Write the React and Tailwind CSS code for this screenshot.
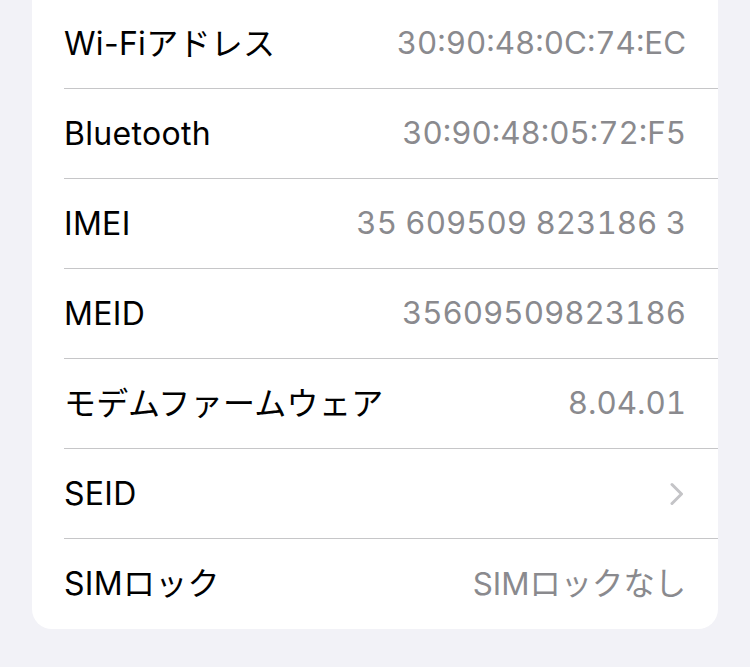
import React from 'react';

const rows = [
  { label: 'Wi-Fiアドレス', value: '30:90:48:0C:74:EC' },
  { label: 'Bluetooth', value: '30:90:48:05:72:F5' },
  { label: 'IMEI', value: '35 609509 823186 3' },
  { label: 'MEID', value: '35609509823186' },
  { label: 'モデムファームウェア', value: '8.04.01' },
  { label: 'SEID', chevron: true },
  { label: 'SIMロック', value: 'SIMロックなし' },
];

const Chevron = () => (
  <svg width="14" height="24" viewBox="0 0 14 24" fill="none" className="mr-[2px]">
    <path d="M2 2.5 L11.5 12 L2 21.5" stroke="#c4c4c7" strokeWidth="3" strokeLinecap="round" strokeLinejoin="round" />
  </svg>
);

export default function App() {
  return (
    <div
      className="w-[750px] h-[667px] bg-[#f2f2f7] overflow-hidden"
      style={{ fontFamily: 'Inter, "Noto Sans CJK JP", sans-serif' }}
    >
      <div className="mx-8 -mt-[1px] bg-white rounded-b-[20px] pl-8">
        {rows.map((row, i) => (
          <div
            key={row.label}
            className={
              'h-[90px] flex items-center justify-between pr-8 ' +
              (i < rows.length - 1 ? 'border-b border-[#c6c6c8]' : '')
            }
          >
            <span className="text-[32px] text-black tracking-[0.3px]">{row.label}</span>
            {row.chevron ? (
              <Chevron />
            ) : (
              <span className="text-[31.3px] text-[#8a8a8e] tabular-nums">{row.value}</span>
            )}
          </div>
        ))}
      </div>
    </div>
  );
}
